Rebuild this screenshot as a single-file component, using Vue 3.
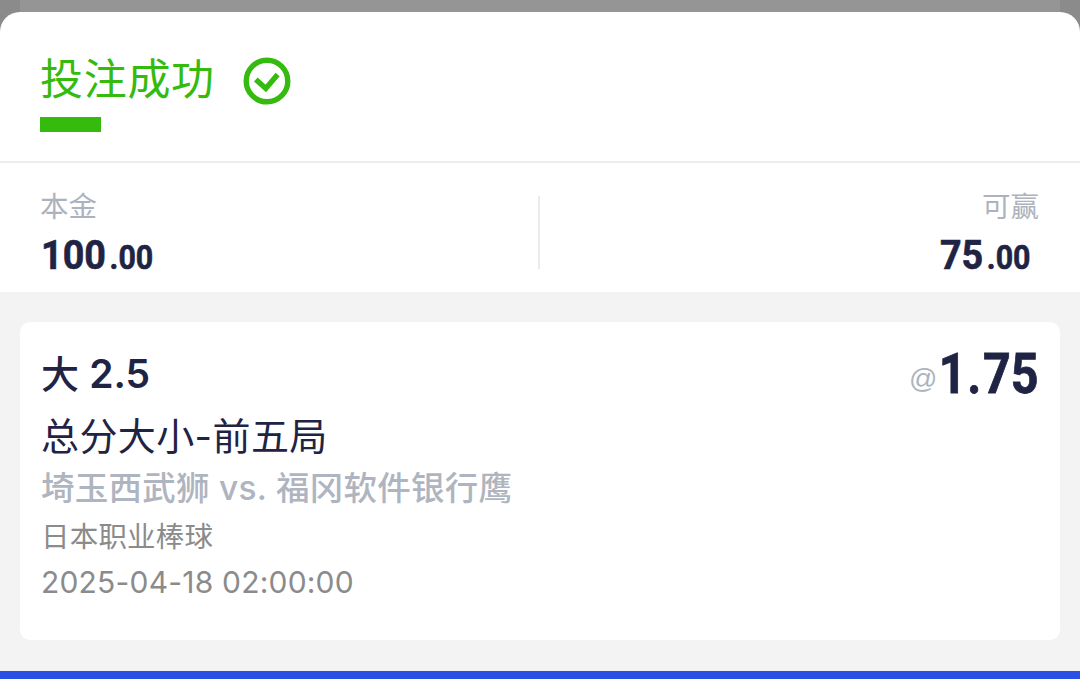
<script setup>
import { ref, computed } from 'vue';

const stake = ref(100);
const odds = ref(1.75);

const bet = ref({
  pick: '大',
  line: '2.5',
  market: '总分大小-前五局',
  match: '埼玉西武狮 vs. 福冈软件银行鹰',
  league: '日本职业棒球',
  time: '2025-04-18 02:00:00'
});

// 本金和可赢金额，整数和小数分开显示
const amounts = computed(() => [
  { label: '本金', value: stake.value },
  { label: '可赢', value: stake.value * (odds.value - 1) }
].map(item => {
  const [int, dec] = item.value.toFixed(2).split('.');
  return { label: item.label, int, dec };
}));

const oddsParts = computed(() => odds.value.toFixed(2).split('.'));
</script>


<template>
  <div class="page">
    <div class="sheet">
      <div class="header">
        <div class="title">
          <span class="title-text">投注成功</span>
          <svg class="check" viewBox="0 0 48 48">
            <circle cx="24" cy="24" r="20.8" />
            <path d="M12.8 22.4 L22.8 31.4 L34.6 17.4" />
          </svg>
        </div>
        <div class="bar"></div>
      </div>

      <div class="summary">
        <div v-for="item in amounts" :key="item.label" class="amount">
          <div class="label">{{ item.label }}</div>
          <div class="number">
            <span class="int">{{ item.int }}</span><span class="dec">.{{ item.dec }}</span>
          </div>
        </div>
      </div>

      <div class="content">
        <div class="card">
          <div class="info">
            <div class="pick">{{ bet.pick }} <span class="line">{{ bet.line }}</span></div>
            <div class="market">{{ bet.market }}</div>
            <div class="match">{{ bet.match }}</div>
            <div class="league">{{ bet.league }}</div>
            <div class="time">{{ bet.time }}</div>
          </div>
          <div class="odds">
            <span class="at">@</span>
            <span class="odds-value">{{ oddsParts[0] }}<span class="dot">.</span>{{ oddsParts[1] }}</span>
          </div>
        </div>
      </div>

      <div class="footer"></div>
    </div>
  </div>
</template>


<style>
body {
  margin: 0;
}
</style>

<style scoped>
.page {
  box-sizing: border-box;
  width: 1080px;
  height: 679px;
  padding-top: 12px;
  overflow: hidden;
  background: linear-gradient(to right, #8b8b8b 20px, #959595 20px, #959595 1060px, #8b8b8b 1060px);
  font-family: Inter, "Noto Sans CJK SC", sans-serif;
  color: #1f2344;
}

.sheet {
  display: flex;
  flex-direction: column;
  height: 667px;
  border-radius: 20px 20px 0 0;
  background: #fff;
  overflow: hidden;
}

.header {
  box-sizing: border-box;
  height: 151px;
  padding: 36px 40px 0;
  border-bottom: 2px solid #ededed;
}

.title {
  display: flex;
  align-items: center;
  gap: 28px;
  height: 60px;
  font-size: 43px;
  letter-spacing: 0.7px;
  color: #35bb0d;
}

.title-text {
  margin-bottom: 5px;
}

.check {
  width: 48px;
  height: 48px;
  margin-top: 6px;
  fill: none;
  stroke: #35bb0d;
  stroke-width: 5.4;
}

.bar {
  width: 61px;
  height: 15px;
  margin-top: 9px;
  background: #35bb0d;
}

.summary {
  display: flex;
  height: 129px;
  padding: 0 41px 0 40px;
}

.amount {
  flex: 1;
  padding-top: 24px;
}

.amount:first-child {
  background: linear-gradient(#ebebeb, #ebebeb) no-repeat right 0 top 33px / 2px 73px;
}

.amount:last-child {
  text-align: right;
}

.label {
  height: 40px;
  line-height: 40px;
  font-size: 28.5px;
  color: #adb3be;
}

.number {
  display: inline-block;
  height: 56px;
  line-height: 56px;
  margin-left: 1px;
  font-family: Roboto, sans-serif;
  font-weight: 700;
  -webkit-text-stroke: 0.6px #1f2344;
  transform: scaleX(0.92);
  transform-origin: left;
}

.amount:last-child .number {
  margin-right: 9px;
  transform-origin: right;
}

.int {
  font-size: 41px;
}

.dec {
  margin-left: 4px;
  font-size: 33px;
}

.content {
  flex: 1;
  padding: 30px 20px;
  background: #f3f3f3;
}

.card {
  box-sizing: border-box;
  display: flex;
  justify-content: space-between;
  height: 318px;
  padding: 26px 21px;
  border-radius: 10px;
  background: #fff;
}

.pick {
  height: 52px;
  line-height: 52px;
  font-size: 38px;
  font-weight: 500;
}

.line {
  font-size: 39px;
  font-weight: 600;
}

.market {
  height: 72px;
  line-height: 72px;
  font-size: 38px;
  letter-spacing: 0.4px;
}

.match {
  height: 32px;
  line-height: 32px;
  font-size: 33.5px;
  font-weight: 500;
  letter-spacing: 0.25px;
  color: #afb5c0;
}

.league {
  height: 66px;
  line-height: 66px;
  font-size: 28.5px;
  letter-spacing: 0.2px;
  color: #8b8b8b;
}

.time {
  height: 24px;
  line-height: 24px;
  font-size: 30px;
  letter-spacing: 0.2px;
  color: #8b8b8b;
}

.odds {
  display: flex;
  align-items: baseline;
  height: 52px;
  line-height: 52px;
}

.at {
  margin-right: -12px;
  font-family: "Liberation Sans", sans-serif;
  font-size: 28px;
  color: #adb3be;
  transform: translateY(-5px);
}

.odds-value {
  font-family: Roboto, sans-serif;
  font-size: 55px;
  font-weight: 700;
  -webkit-text-stroke: 0.8px #1f2344;
  transform: scaleX(0.88);
  transform-origin: right;
}

.dot {
  padding: 0 2px 0 1px;
}

.footer {
  height: 8px;
  background: #2b50e6;
}
</style>
